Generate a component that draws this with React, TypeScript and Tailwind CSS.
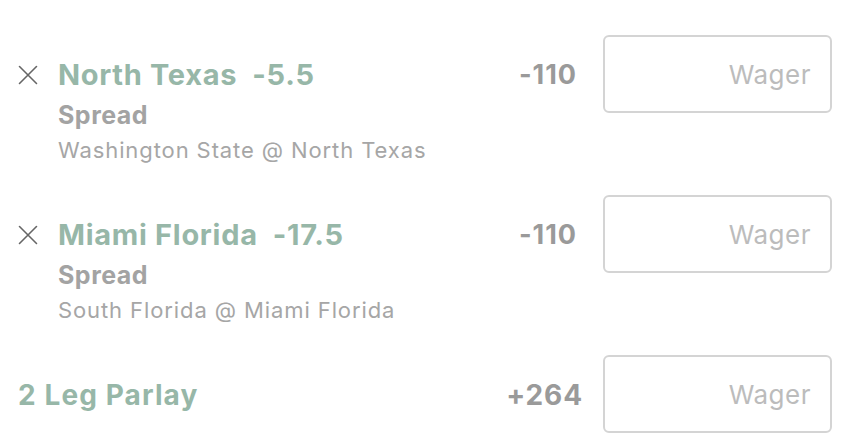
import React from "react"

type Leg = {
  team: string
  line: string
  market: string
  matchup: string
  odds: string
}

const legs: Leg[] = [
  { team: "North Texas", line: "-5.5", market: "Spread", matchup: "Washington State @ North Texas", odds: "-110" },
  { team: "Miami Florida", line: "-17.5", market: "Spread", matchup: "South Florida @ Miami Florida", odds: "-110" },
]

function CloseIcon() {
  return (
    <svg width="20" height="20" viewBox="0 0 20 20" className="shrink-0">
      <path d="M1.5 1.5 L18.5 18.5 M18.5 1.5 L1.5 18.5" stroke="#666" strokeWidth="1.6" strokeLinecap="round" />
    </svg>
  )
}

function WagerBox() {
  return (
    <div className="flex h-[78px] w-[229px] shrink-0 items-center justify-end rounded-[6px] border-2 border-[#d4d4d4] pr-[19px]">
      <span className="text-[26px] tracking-[0.5px] text-[#bcbcbc]">Wager</span>
    </div>
  )
}

export default function App() {
  return (
    <div
      className="h-[446px] w-[850px] overflow-hidden bg-white pt-[35px] pr-[18px] pl-[18px]"
      style={{ fontFamily: "Inter, 'Noto Sans', sans-serif" }}
    >
      {legs.map((leg) => (
        <div key={leg.team} className="flex h-[160px] items-start">
          <div className="flex h-[78px] w-[40px] shrink-0 items-center pt-[2px]">
            <CloseIcon />
          </div>
          <div className="flex-1 pt-[22px]">
            <div className="text-[29px] leading-[36px] font-bold tracking-[0.7px] whitespace-pre text-[#97b7a8]">
              {leg.team}  {leg.line}
            </div>
            <div className="mt-[8px] text-[25px] leading-[28px] font-bold tracking-[0.5px] text-[#a3a3a3]">{leg.market}</div>
            <div className="mt-[8px] text-[22px] leading-[26px] tracking-[0.9px] text-[#a6a6a6]">{leg.matchup}</div>
          </div>
          <div className="flex h-[78px] items-center pt-[2px] pr-[26px] text-[27px] font-bold tracking-[1px] text-[#9a9a9a]">{leg.odds}</div>
          <WagerBox />
        </div>
      ))}

      {/* parlay total */}
      <div className="flex items-start">
        <div className="flex h-[78px] flex-1 items-center pt-[2px] text-[28px] font-bold tracking-[1.1px] text-[#97b7a8]">2 Leg Parlay</div>
        <div className="flex h-[78px] items-center pt-[2px] pr-[20px] text-[28px] font-bold tracking-[0.9px] text-[#9a9a9a]">+264</div>
        <WagerBox />
      </div>
    </div>
  )
}
